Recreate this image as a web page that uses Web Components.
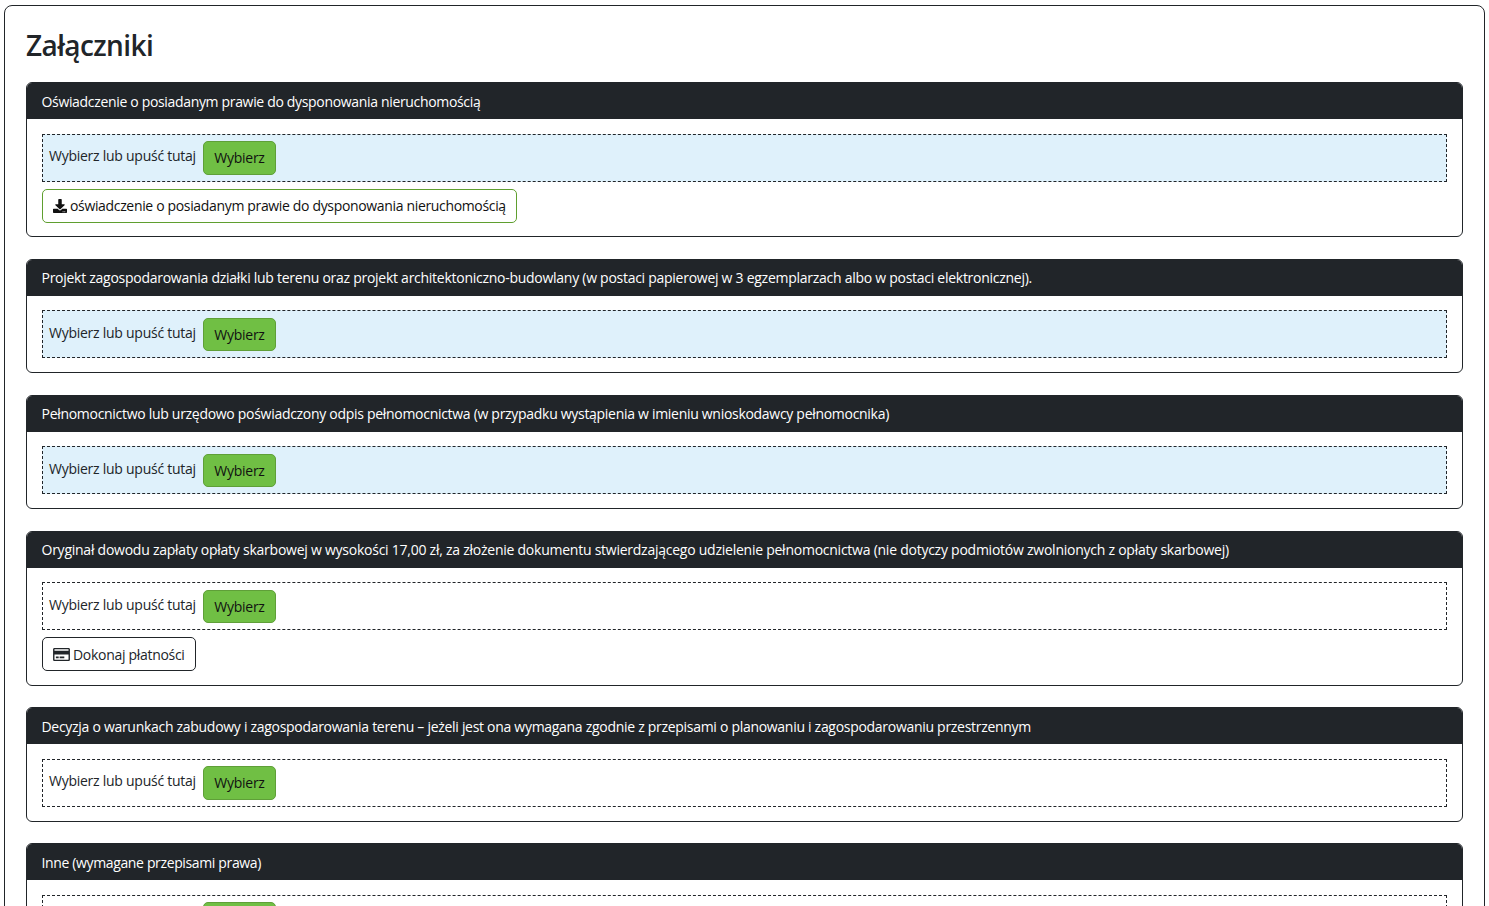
<!DOCTYPE html>
<html lang="pl">
<head>
<meta charset="utf-8">
<title>Załączniki</title>
<style>
  html { overflow: hidden; }
  body {
    margin: 5px 4px 0;
    font-family: "Open Sans", "Noto Sans", sans-serif;
    font-size: 14px;
    line-height: 21px;
    letter-spacing: -0.26px;
    color: #212529;
    background: #fff;
  }
</style>
</head>
<body>
<attachments-panel heading="Załączniki">
  <attachment-card tracking="-0.33" title="Oświadczenie o posiadanym prawie do dysponowania nieruchomością" tint>
    <action-button variant="success" icon="download" style="letter-spacing:-0.34px">oświadczenie o posiadanym prawie do dysponowania nieruchomością</action-button>
  </attachment-card>
  <attachment-card tracking="-0.268" title="Projekt zagospodarowania działki lub terenu oraz projekt architektoniczno-budowlany (w postaci papierowej w 3 egzemplarzach albo w postaci elektronicznej)." tint></attachment-card>
  <attachment-card tracking="-0.295" title="Pełnomocnictwo lub urzędowo poświadczony odpis pełnomocnictwa (w przypadku wystąpienia w imieniu wnioskodawcy pełnomocnika)" tint></attachment-card>
  <attachment-card tracking="-0.246" title="Oryginał dowodu zapłaty opłaty skarbowej w wysokości 17,00 zł, za złożenie dokumentu stwierdzającego udzielenie pełnomocnictwa (nie dotyczy podmiotów zwolnionych z opłaty skarbowej)">
    <action-button icon="card" style="letter-spacing:-0.3px">Dokonaj płatności</action-button>
  </attachment-card>
  <attachment-card tracking="-0.293" title="Decyzja o warunkach zabudowy i zagospodarowania terenu – jeżeli jest ona wymagana zgodnie z przepisami o planowaniu i zagospodarowaniu przestrzennym"></attachment-card>
  <attachment-card tracking="-0.36" title="Inne (wymagane przepisami prawa)"></attachment-card>
</attachments-panel>

<script>
const ICONS = {
  download: `<svg viewBox="0 0 512 512" width="14" height="14"><path fill="currentColor" d="M216 0h80c13.3 0 24 10.7 24 24v168h87.7c17.8 0 26.7 21.5 14.1 34.1L269.7 378.3c-7.5 7.5-19.8 7.5-27.3 0L90.1 226.1c-12.6-12.6-3.7-34.1 14.1-34.1H192V24c0-13.3 10.7-24 24-24zm296 376v112c0 13.3-10.7 24-24 24H24c-13.3 0-24-10.7-24-24V376c0-13.3 10.7-24 24-24h146.7l49 49c20.1 20.1 52.5 20.1 72.6 0l49-49H488c13.3 0 24 10.7 24 24zm-124 88c0-11-9-20-20-20s-20 9-20 20 9 20 20 20 20-9 20-20zm64 0c0-11-9-20-20-20s-20 9-20 20 9 20 20 20 20-9 20-20z"/></svg>`,
  card: `<svg viewBox="0 0 576 512" width="17" height="15"><path fill="currentColor" d="M527.9 32H48.1C21.5 32 0 53.5 0 80v352c0 26.5 21.5 48 48.1 48h479.8c26.6 0 48.1-21.5 48.1-48V80c0-26.5-21.5-48-48.1-48zM54.1 80h467.8c3.3 0 6 2.7 6 6v42H48.1V86c0-3.3 2.7-6 6-6zm467.8 352H54.1c-3.3 0-6-2.7-6-6V256h479.8v170c0 3.3-2.7 6-6 6zM192 332v40c0 6.6-5.4 12-12 12h-72c-6.6 0-12-5.4-12-12v-40c0-6.6 5.4-12 12-12h72c6.6 0 12 5.4 12 12zm192 0v40c0 6.6-5.4 12-12 12H236c-6.6 0-12-5.4-12-12v-40c0-6.6 5.4-12 12-12h136c6.6 0 12 5.4 12 12z"/></svg>`
};

class AttachmentsPanel extends HTMLElement {
  constructor() {
    super();
    this.attachShadow({ mode: 'open' });
  }

  connectedCallback() {
    this.shadowRoot.innerHTML = `
      <style>
        :host {
          display: block;
          border: 1px solid #212529;
          border-radius: 8px;
          padding: 15px 21px;
        }
        h2 {
          margin: 7px 0 20.2px;
          font-size: 28px;
          line-height: 34px;
          font-weight: 600;
          letter-spacing: -0.6px;
        }
        .cards {
          display: flex;
          flex-direction: column;
          gap: 21.3px;
        }
      </style>
      <h2>${this.getAttribute('heading')}</h2>
      <div class="cards"><slot></slot></div>
    `;
  }
}

class AttachmentCard extends HTMLElement {
  constructor() {
    super();
    this.attachShadow({ mode: 'open' });
  }

  connectedCallback() {
    const tracking = this.getAttribute('tracking') || '-0.26';

    this.shadowRoot.innerHTML = `
      <style>
        :host {
          display: block;
          border: 1px solid #212529;
          border-radius: 6px;
          overflow: hidden;
        }
        header {
          background: #212529;
          color: #fff;
          padding: 7.5px 14.5px 7.8px;
          letter-spacing: ${tracking}px;
        }
        .body {
          display: flex;
          flex-direction: column;
          align-items: flex-start;
          gap: 7px;
          padding: 14.4px 15px 14px;
        }
        ::slotted(action-button) { margin-bottom: -0.3px; }
      </style>
      <header>${this.getAttribute('title')}</header>
      <div class="body">
        <drop-zone ${this.hasAttribute('tint') ? 'tint' : ''}></drop-zone>
        <slot></slot>
      </div>
    `;
  }
}

class DropZone extends HTMLElement {
  constructor() {
    super();
    this.attachShadow({ mode: 'open' });
  }

  connectedCallback() {
    this.shadowRoot.innerHTML = `
      <style>
        :host {
          display: flex;
          align-items: center;
          gap: 7px;
          align-self: stretch;
          box-sizing: border-box;
          height: 48px;
          padding: 0 6px;
          border: 1px dashed #212529;
        }
        :host([tint]) { background: #dff1fb; }
        span { position: relative; top: -2px; }
        button {
          font: inherit;
          letter-spacing: inherit;
          height: 33.6px;
          padding: 0 10.5px;
          color: #111;
          background: #70bf44;
          border: 1px solid #5f9f38;
          border-radius: 5px;
        }
      </style>
      <span>Wybierz lub upuść tutaj</span>
      <button type="button">Wybierz</button>
    `;
  }
}

class ActionButton extends HTMLElement {
  constructor() {
    super();
    this.attachShadow({ mode: 'open' });
  }

  connectedCallback() {
    this.shadowRoot.innerHTML = `
      <style>
        :host {
          display: inline-flex;
          align-items: center;
          gap: 3px;
          box-sizing: border-box;
          height: 33.8px;
          padding: 0 10px;
          border: 1px solid #212529;
          border-radius: 5px;
          background: #fff;
        }
        :host([variant="success"]) {
          border-color: #5f9f2f;
          color: #111;
        }
        svg { display: block; }
      </style>
      ${ICONS[this.getAttribute('icon')]}<slot></slot>
    `;
  }
}

customElements.define('attachments-panel', AttachmentsPanel);
customElements.define('attachment-card', AttachmentCard);
customElements.define('drop-zone', DropZone);
customElements.define('action-button', ActionButton);
</script>
</body>
</html>
